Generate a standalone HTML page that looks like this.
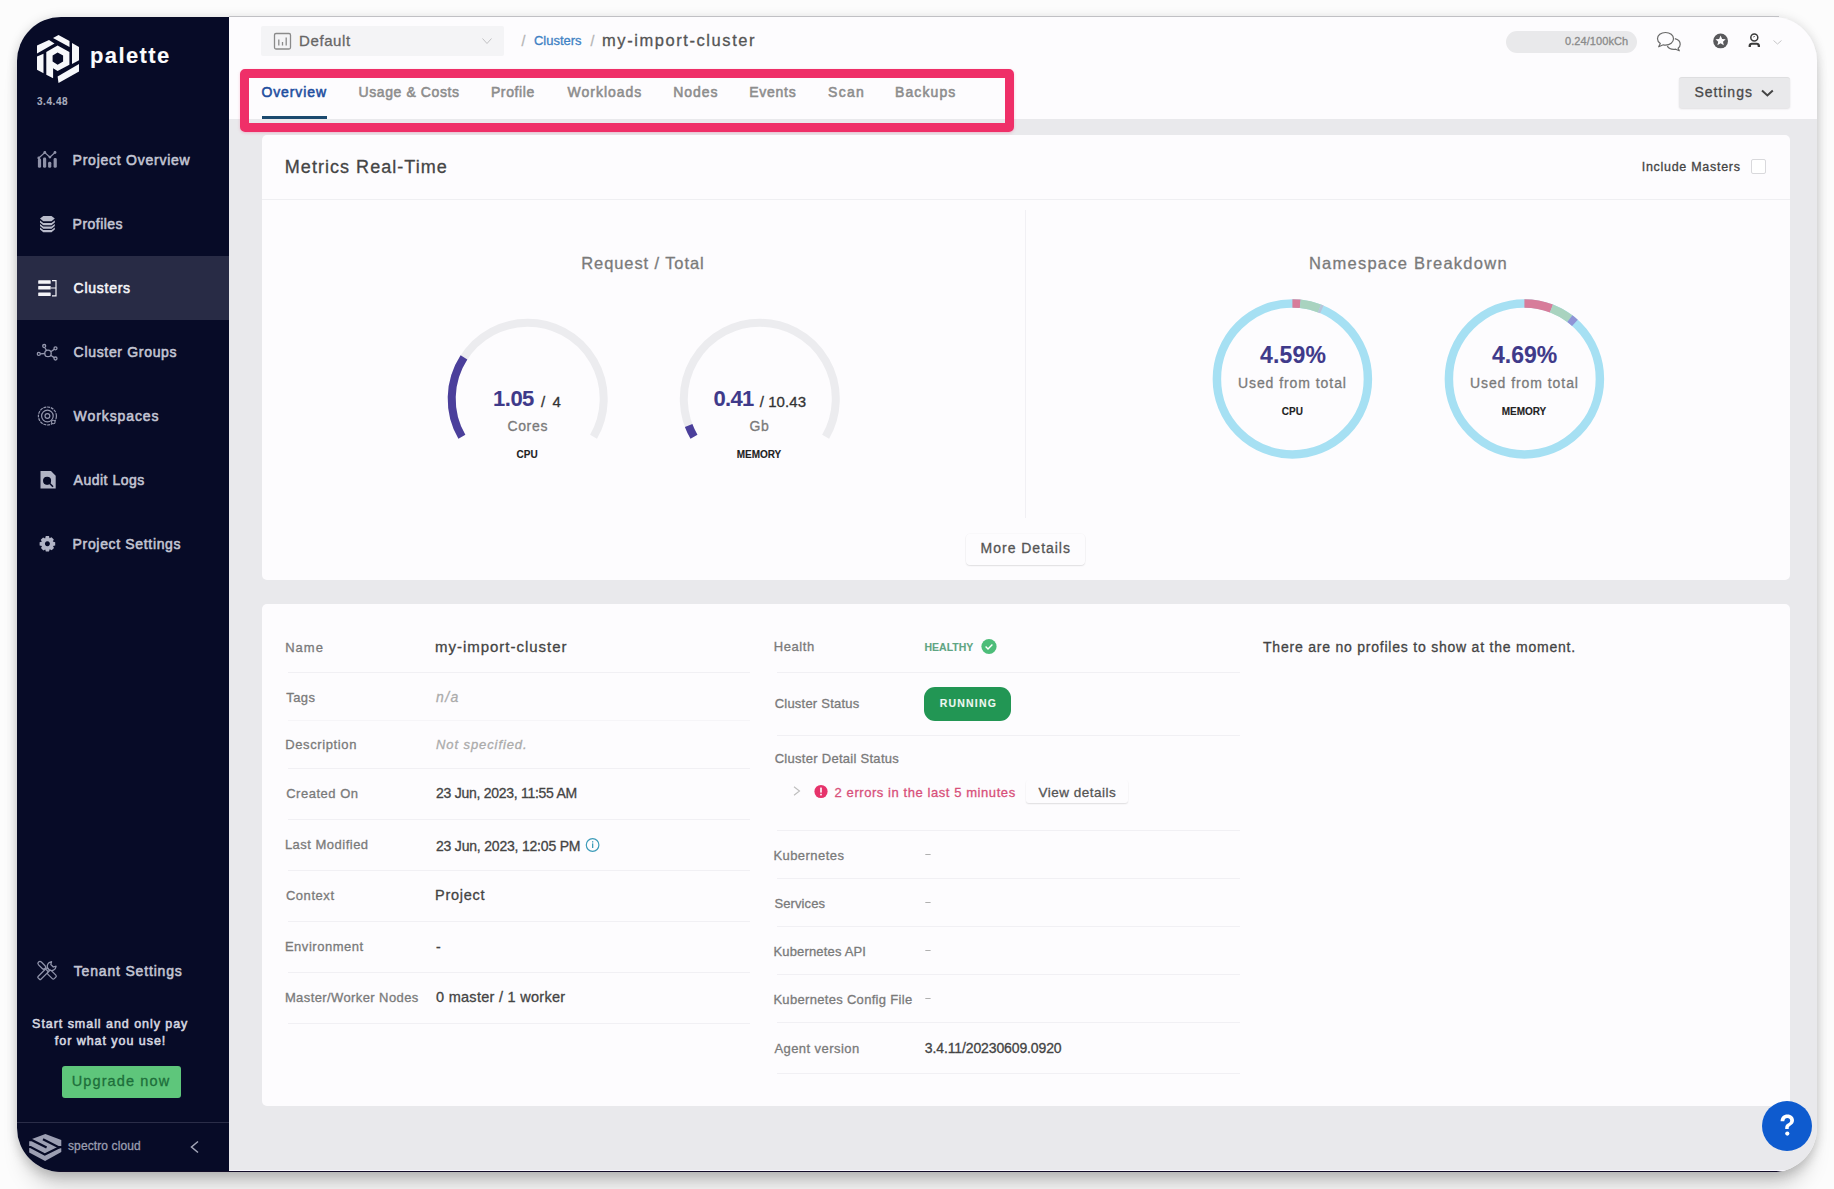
<!DOCTYPE html>
<html><head><meta charset="utf-8">
<style>
*{box-sizing:border-box;margin:0;padding:0}
html,body{width:1834px;height:1189px;overflow:hidden;background:#fcfcfc;font-family:"Liberation Sans",sans-serif}
#shadow{position:absolute;left:17px;top:17px;width:1800px;height:1155px;border-radius:44px;box-shadow:0 6px 12px rgba(0,0,0,.12),0 0 12px rgba(0,0,0,.10),0 24px 22px -8px rgba(0,0,0,.15)}
#win{position:absolute;left:17px;top:17px;width:1800px;height:1155px;border-radius:44px;overflow:hidden;background:#e9e9ec}
#pg{position:absolute;left:-17px;top:-17px;width:1834px;height:1189px}
.r{position:absolute}
.t{position:absolute;white-space:nowrap;line-height:1;-webkit-text-stroke:0.3px currentColor}
svg.ov{position:absolute;left:0;top:0}
</style></head><body>
<div class="r" style="left:229px;top:16px;width:1550px;height:1px;background:#cdcdd1"></div>
<div id="shadow"></div>
<div id="win"><div id="pg">
  <!-- sidebar -->
  <div class="r" style="left:0;top:0;width:229px;height:1189px;background:#070b27"></div>
  <div class="r" style="left:0;top:256px;width:229px;height:64px;background:#282b45"></div>
  <div class="r" style="left:0;top:1122px;width:229px;height:1px;background:#2a2d48"></div>
  <div class="r" style="left:62px;top:1066px;width:118.5px;height:31.5px;background:#5ec67b;border-radius:3px"></div>
  <!-- header -->
  <div class="r" style="left:229px;top:0;width:1605px;height:119px;background:#fdfcfe"></div>
  <div class="r" style="left:261px;top:26px;width:243px;height:30px;background:#f4f4f6;border-radius:2px"></div>
  <div class="r" style="left:1506px;top:31px;width:131px;height:22px;background:#e9e9eb;border-radius:11px"></div>
  <div class="r" style="left:1679px;top:76.5px;width:110.5px;height:31px;background:#e9e9eb;border-radius:3px;border-top:1px solid #dedee0;box-shadow:0 1px 2px rgba(0,0,0,.12)"></div>
  <!-- pink highlight -->
  <div class="r" style="left:240px;top:69px;width:774px;height:63px;border:9.5px solid #ef2f68;border-radius:5px;box-shadow:0 1px 3px rgba(240,48,106,.25)"></div>
  <div class="r" style="left:262px;top:116px;width:65px;height:3px;background:#1b4a6f"></div>
  <!-- cards -->
  <div class="r" style="left:262px;top:135px;width:1528px;height:445px;background:#fdfcfe;border-radius:5px"></div>
  <div class="r" style="left:262px;top:199px;width:1528px;height:1px;background:#efeff2"></div>
  <div class="r" style="left:1025px;top:210px;width:1px;height:308px;background:#f1f0f4"></div>
  <div class="r" style="left:1751px;top:159px;width:15px;height:15px;border:1px solid #d9d9dc;border-radius:2px;background:#fff"></div>
  <div class="r" style="left:966px;top:534px;width:119px;height:31px;border-radius:4px;box-shadow:0 1px 1.5px rgba(0,0,0,.10),0 0 0 .5px rgba(0,0,0,.03)"></div>
  <div class="r" style="left:262px;top:604px;width:1528px;height:501.5px;background:#fdfcfe;border-radius:5px"></div>
  <!-- row dividers -->
  <div class="r" style="left:288px;top:672px;width:462px;height:1px;background:#f1f0f4"></div>
  <div class="r" style="left:288px;top:720px;width:462px;height:1px;background:#f6f5f8"></div>
  <div class="r" style="left:288px;top:768px;width:462px;height:1px;background:#f1f0f4"></div>
  <div class="r" style="left:288px;top:819px;width:462px;height:1px;background:#f1f0f4"></div>
  <div class="r" style="left:288px;top:870px;width:462px;height:1px;background:#f1f0f4"></div>
  <div class="r" style="left:288px;top:921px;width:462px;height:1px;background:#f1f0f4"></div>
  <div class="r" style="left:288px;top:972px;width:462px;height:1px;background:#f1f0f4"></div>
  <div class="r" style="left:288px;top:1023px;width:462px;height:1px;background:#f1f0f4"></div>
  <div class="r" style="left:777px;top:672px;width:463px;height:1px;background:#f1f0f4"></div>
  <div class="r" style="left:777px;top:735px;width:463px;height:1px;background:#f1f0f4"></div>
  <div class="r" style="left:777px;top:830px;width:463px;height:1px;background:#f1f0f4"></div>
  <div class="r" style="left:777px;top:878px;width:463px;height:1px;background:#f1f0f4"></div>
  <div class="r" style="left:777px;top:926px;width:463px;height:1px;background:#f1f0f4"></div>
  <div class="r" style="left:777px;top:974px;width:463px;height:1px;background:#f1f0f4"></div>
  <div class="r" style="left:777px;top:1022px;width:463px;height:1px;background:#f1f0f4"></div>
  <div class="r" style="left:777px;top:1073px;width:463px;height:1px;background:#f1f0f4"></div>
  <div class="r" style="left:924.4px;top:687px;width:87px;height:33.5px;background:#229654;border-radius:11px"></div>
  <div class="r" style="left:1026px;top:780px;width:102px;height:23px;border-radius:3px;box-shadow:0 1px 1.5px rgba(0,0,0,.12)"></div>
  <!-- bottom dark line -->
  <div class="r" style="left:229px;top:1170px;width:1605px;height:1px;background:#f8f6fe"></div><div class="r" style="left:0;top:1171px;width:1834px;height:1px;background:#120c28"></div>
  <!-- help -->
  <div class="r" style="left:1762px;top:1101px;width:50px;height:50px;border-radius:25px;background:#0e5bcf"></div>

  <svg class="ov" width="1834" height="1189" viewBox="0 0 1834 1189">
<path d="M461.88,436.80 A76,76 0 1 1 593.52,436.80" fill="none" stroke="#ececef" stroke-width="8"/>
<path d="M461.88,436.80 A76,76 0 0 1 463.96,357.41" fill="none" stroke="#4b3f9b" stroke-width="8"/>
<path d="M693.98,436.80 A76,76 0 1 1 825.62,436.80" fill="none" stroke="#ececef" stroke-width="8"/>
<path d="M693.98,436.80 A76,76 0 0 1 688.64,425.50" fill="none" stroke="#4b3f9b" stroke-width="8"/>
<circle cx="1292.4" cy="378.9" r="75.5" fill="none" stroke="#a6e0f3" stroke-width="8.5"/>
<path d="M1292.40,303.40 A75.5,75.5 0 0 1 1300.29,303.81" fill="none" stroke="#d77c9a" stroke-width="8.5"/>
<path d="M1300.29,303.81 A75.5,75.5 0 0 1 1319.46,308.41" fill="none" stroke="#a9d3bf" stroke-width="8.5"/>
<path d="M1319.46,308.41 A75.5,75.5 0 0 1 1321.90,309.40" fill="none" stroke="#b9c3d8" stroke-width="8.5"/>
<circle cx="1524.4" cy="378.9" r="75.5" fill="none" stroke="#a6e0f3" stroke-width="8.5"/>
<path d="M1524.40,303.40 A75.5,75.5 0 0 1 1551.46,308.41" fill="none" stroke="#d77c9a" stroke-width="8.5"/>
<path d="M1551.46,308.41 A75.5,75.5 0 0 1 1569.84,318.60" fill="none" stroke="#a9d3bf" stroke-width="8.5"/>
<path d="M1569.84,318.60 A75.5,75.5 0 0 1 1574.92,322.79" fill="none" stroke="#8f94d6" stroke-width="8.5"/>
<!-- palette logo -->
<g fill="#f7f8fb">
<polygon points="37,45.5 49,40 54.5,43.5 37,53.5"/>
<polygon points="53,38 58.5,35 69.5,41 69.5,47"/>
<polygon points="72,43 79,47 79,60.2 72,64"/>
<polygon points="57.6,76.5 79,64 79,71.5 58.5,83"/>
<polygon points="37,56.5 43.5,53.8 43.5,73.3 37,69.7"/>
<path fill-rule="evenodd" d="M46.3,52 L57.6,45.6 L69.4,52 L69.4,64.7 L57.6,71 L53.1,68.3 L53.1,78.3 L46.3,74.7 Z M57.6,52.4 L63.1,55.6 L63.1,61.5 L57.6,64.7 L52.6,61.5 L52.6,55.6 Z"/>
</g>
<!-- project overview -->
<g fill="#8f92a8">
<rect x="37.9" y="158.5" width="3.2" height="9.3" rx="1.4"/>
<rect x="43" y="157.6" width="3.2" height="10.2" rx="1.4"/>
<rect x="48.1" y="161.8" width="3.2" height="6" rx="1.4"/>
<rect x="53.6" y="158" width="3.2" height="9.8" rx="1.4"/>
<circle cx="38.8" cy="158" r="1.4"/><circle cx="44.8" cy="152.5" r="1.4"/><circle cx="49.9" cy="157.1" r="1.4"/><circle cx="55" cy="152.5" r="1.4"/>
</g>
<polyline points="38.8,158 44.8,152.5 49.9,157.1 55,152.5" fill="none" stroke="#8f92a8" stroke-width="1.2"/>
<!-- profiles -->
<g fill="#b9bccb">
<path d="M40,218.6 L43.3,216 L51.5,216 L54.8,218.6 L51.5,221.2 L43.3,221.2 Z"/>
<path d="M40,220.6 L43.3,223 L51.5,223 L54.8,220.6 L54.8,222.6 L51.5,225.2 L43.3,225.2 L40,222.6 Z"/>
<path d="M40,224.1 L43.3,226.5 L51.5,226.5 L54.8,224.1 L54.8,226.1 L51.5,228.7 L43.3,228.7 L40,226.1 Z"/>
<path d="M40,227.6 L43.3,230 L51.5,230 L54.8,227.6 L54.8,229.6 L51.5,232.3 L43.3,232.3 L40,229.6 Z"/>
</g>
<!-- clusters -->
<g fill="#f4f4f8">
<rect x="38.2" y="280.3" width="12.5" height="3.5" rx="0.6"/>
<rect x="38.2" y="286" width="12.5" height="3.5" rx="0.6"/>
<rect x="38.2" y="292.5" width="12.5" height="3.5" rx="0.6"/>
</g>
<path d="M52,280.6 H56 V295.8 H52 M51,288 H56" fill="none" stroke="#f4f4f8" stroke-width="1.2"/>
<!-- cluster groups -->
<g fill="none" stroke="#9598ae" stroke-width="1.3">
<circle cx="48" cy="353.4" r="3.2"/>
<circle cx="44.2" cy="346" r="1.5"/><circle cx="55.5" cy="348.3" r="1.5"/><circle cx="38.8" cy="353.9" r="1.5"/><circle cx="55.5" cy="358.5" r="1.5"/>
<path d="M45,348 L46.6,350.5 M54.2,349.4 L50.8,351.8 M40.3,353.8 L44.8,353.5 M54.2,357.6 L50.6,355.3"/>
</g>
<!-- workspaces -->
<g fill="none" stroke="#9598ae" stroke-width="1.2">
<circle cx="47.4" cy="416" r="9" stroke-dasharray="3 0.8"/>
<circle cx="47.4" cy="416" r="5.8"/>
<circle cx="47.4" cy="416" r="2.4"/>
</g>
<circle cx="53.3" cy="422" r="1.8" fill="#070b27" stroke="#9598ae" stroke-width="1.1"/>
<!-- audit logs -->
<path fill="#b1b4c5" fill-rule="evenodd" d="M40.5,471 H51 L55.7,475.7 V488.6 H40.5 Z M47.1,477 a3.7,3.7 0 1,0 0.01,0 Z"/>
<circle cx="47.1" cy="480.7" r="3.3" fill="none" stroke="#070b27" stroke-width="1.4"/>
<path d="M49.5,483.2 L53,486.7" stroke="#070b27" stroke-width="1.6"/>
<!-- project settings gear -->
<g transform="translate(47.4,543.8)">
<path fill="#b1b4c5" fill-rule="evenodd" d="M-1.6,-7.8 H1.6 L2.1,-5.6 L4.1,-6.6 L6.4,-4.3 L5.4,-2.3 L7.8,-1.6 V1.6 L5.6,2.1 L6.6,4.1 L4.3,6.4 L2.3,5.4 L1.6,7.8 H-1.6 L-2.1,5.6 L-4.1,6.6 L-6.4,4.3 L-5.4,2.3 L-7.8,1.6 V-1.6 L-5.6,-2.1 L-6.6,-4.1 L-4.3,-6.4 L-2.3,-5.4 Z M0,-2.5 a2.5,2.5 0 1,0 0.01,0 Z"/>
</g>
<!-- tenant settings -->
<g fill="none" stroke="#9094ab" stroke-width="1.25" stroke-linejoin="round">
<rect x="-4.6" y="-2" width="9.2" height="4" rx="2" transform="translate(41.8,965.3) rotate(45)"/>
<path d="M45.2,968.6 L48.6,972"/>
<rect x="-4.6" y="-2.5" width="9.2" height="5" rx="1.4" transform="translate(51.8,974.6) rotate(45)"/>
<rect x="-6.8" y="-2" width="13.6" height="4" rx="1" transform="translate(43.6,973.8) rotate(-45)"/>
<path d="M48.3,969.2 A5,5 0 0 1 49.2,962.6 L51.6,961.7 L50.8,964.5 L53.3,967 L56.1,966.2 L55.3,968.6 A5,5 0 0 1 48.8,969.8"/>
</g>
<!-- spectro cloud logo -->
<polygon points="45.4,1134.1 61.3,1140 61.3,1152.1 45.1,1160.9 29.2,1152.4 29.2,1140" fill="#9c9fb3"/>
<g fill="none" stroke="#070b27" stroke-width="2.2">
<path d="M28.5,1140.2 L32,1140.2 L46.6,1147.6"/>
<path d="M43,1139.2 L58.6,1147.2 L62,1147.2"/>
<path d="M28.5,1147 L30.6,1147 L44.8,1154.5 L60,1147"/>
</g>
<path d="M198,1141.5 L191.5,1147 L198,1152.5" fill="none" stroke="#a3a6b8" stroke-width="1.5"/>
<!-- header: selector icon -->
<rect x="274.5" y="33.5" width="16" height="15.5" rx="1.5" fill="none" stroke="#8a8a8a" stroke-width="1.3"/>
<path d="M278.8,45.5 V39.5 M282.5,45.5 V42 M286.2,45.5 V37.5" stroke="#8a8a8a" stroke-width="1.3"/>
<path d="M482.5,38.5 L487,43.5 L491.5,38.5" fill="none" stroke="#c2c2c4" stroke-width="1"/>
<!-- chat -->
<g fill="none" stroke="#6a6a6a" stroke-width="1.2" stroke-linejoin="round">
<path d="M1665.5,32.5 c-4.6,0 -8,2.8 -8,6.3 c0,2 1.1,3.7 2.8,4.8 l-1.6,3.2 l4.6,-2 c0.7,0.2 1.5,0.3 2.2,0.3 c4.6,0 8,-2.8 8,-6.3 c0,-3.5 -3.4,-6.3 -8,-6.3 z"/>
<path d="M1674.8,38.6 c3.2,0.8 5.4,3 5.4,5.6 c0,1.6 -0.8,3 -2.1,4 l1.2,2.6 l-3.6,-1.6 c-0.6,0.1 -1.2,0.2 -1.8,0.2 c-3,0 -5.6,-1.4 -6.6,-3.4"/>
</g>
<!-- star badge -->
<circle cx="1720.6" cy="40.9" r="7.4" fill="#59595c"/>
<path fill="#fdfcfe" d="M1720.6,35.6 L1722.1,39 L1725.7,39.3 L1723,41.7 L1723.8,45.2 L1720.6,43.3 L1717.4,45.2 L1718.2,41.7 L1715.5,39.3 L1719.1,39 Z"/>
<!-- user -->
<circle cx="1754.3" cy="37.5" r="3.5" fill="none" stroke="#3a3a3a" stroke-width="1.5"/>
<path d="M1753.2,37 l1.6,-0.6" stroke="#3a3a3a" stroke-width="0.8"/>
<path d="M1748.6,46.9 V45.6 c0,-1.8 1.4,-2.9 3.2,-2.9 h5 c1.8,0 3.2,1.1 3.2,2.9 V46.9 h-2.3 v-0.9 c0,-0.8 -0.6,-1.2 -1.4,-1.2 h-4 c-0.8,0 -1.4,0.4 -1.4,1.2 v0.9 z" fill="#3a3a3a"/>
<path d="M1773.5,40.5 L1777.5,44 L1781.5,40.5" fill="none" stroke="#c6c6c8" stroke-width="1"/>
<!-- settings chevron -->
<path d="M1762,90.5 L1767.4,95.5 L1772.8,90.5" fill="none" stroke="#444" stroke-width="2"/>
<!-- health check -->
<circle cx="989" cy="646.5" r="7.6" fill="#4dbd79"/>
<path d="M985.6,646.6 L988,649 L992.4,644.4" fill="none" stroke="#fff" stroke-width="1.4"/>
<!-- chevron right -->
<path d="M794,786.8 L799.5,791 L794,795.2" fill="none" stroke="#bdbdbd" stroke-width="1.1"/>
<!-- red error -->
<circle cx="821" cy="791.5" r="6.6" fill="#e6336b"/>
<rect x="820.2" y="787.6" width="1.6" height="5" fill="#fff"/><rect x="820.2" y="793.8" width="1.6" height="1.6" fill="#fff"/>
<!-- info icon -->
<circle cx="592.6" cy="845" r="6.3" fill="none" stroke="#3d9cb9" stroke-width="1.2"/>
<rect x="592" y="843.4" width="1.3" height="4.6" fill="#3d9cb9"/><rect x="592" y="841.2" width="1.3" height="1.3" fill="#3d9cb9"/>
<!-- dashes -->
<g fill="#b0b0b0">
<rect x="925.3" y="854" width="5.3" height="1"/>
<rect x="925.3" y="902" width="5.3" height="1"/>
<rect x="925.3" y="950" width="5.3" height="1"/>
<rect x="925.3" y="998" width="5.3" height="1"/>
</g>
<!-- help ? -->
<path d="M1780.6,1121.2 c0,-4.2 3,-6.8 6.8,-6.8 c3.9,0 6.6,2.5 6.6,5.9 c0,2.8 -1.6,4 -3.4,5.1 c-1.5,0.9 -1.9,1.5 -1.9,2.9 v0.6 h-3.5 v-0.9 c0,-2.3 0.9,-3.4 2.7,-4.5 c1.5,-0.9 2.3,-1.6 2.3,-3.1 c0,-1.5 -1.1,-2.5 -2.8,-2.5 c-1.8,0 -3,1.2 -3.1,3.3 z" fill="#ffffff"/>
<circle cx="1787.3" cy="1133.6" r="2.1" fill="#ffffff"/>

</svg>
<div class="t" style="left:90.0px;top:45.4px;font-size:22px;font-weight:bold;color:#fbfbfd;letter-spacing:1.39px;-webkit-text-stroke:0.1px currentColor;">palette</div>
<div class="t" style="left:37.0px;top:97.0px;font-size:10px;font-weight:bold;color:#a8acbe;letter-spacing:0.55px;-webkit-text-stroke:0.1px currentColor;">3.4.48</div>
<div class="t" style="left:72.6px;top:153.1px;font-size:14px;font-weight:normal;color:#c3c5d3;letter-spacing:0.75px;-webkit-text-stroke:0.55px currentColor;">Project Overview</div>
<div class="t" style="left:72.6px;top:217.1px;font-size:14px;font-weight:normal;color:#c3c5d3;letter-spacing:0.47px;-webkit-text-stroke:0.55px currentColor;">Profiles</div>
<div class="t" style="left:73.6px;top:281.1px;font-size:14px;font-weight:normal;color:#f4f4f8;letter-spacing:0.74px;-webkit-text-stroke:0.55px currentColor;">Clusters</div>
<div class="t" style="left:73.6px;top:345.1px;font-size:14px;font-weight:normal;color:#c3c5d3;letter-spacing:0.68px;-webkit-text-stroke:0.55px currentColor;">Cluster Groups</div>
<div class="t" style="left:73.6px;top:409.1px;font-size:14px;font-weight:normal;color:#c3c5d3;letter-spacing:0.91px;-webkit-text-stroke:0.55px currentColor;">Workspaces</div>
<div class="t" style="left:73.6px;top:473.1px;font-size:14px;font-weight:normal;color:#c3c5d3;letter-spacing:0.50px;-webkit-text-stroke:0.55px currentColor;">Audit Logs</div>
<div class="t" style="left:72.6px;top:537.1px;font-size:14px;font-weight:normal;color:#c3c5d3;letter-spacing:0.66px;-webkit-text-stroke:0.55px currentColor;">Project Settings</div>
<div class="t" style="left:73.8px;top:963.9px;font-size:14px;font-weight:normal;color:#c3c5d3;letter-spacing:0.82px;-webkit-text-stroke:0.55px currentColor;">Tenant Settings</div>
<div class="t" style="left:32.1px;top:1017.6px;font-size:12.5px;font-weight:normal;color:#d6d7e0;letter-spacing:0.95px;-webkit-text-stroke:0.55px currentColor;">Start small and only pay</div>
<div class="t" style="left:54.8px;top:1035.0px;font-size:12.5px;font-weight:normal;color:#d6d7e0;letter-spacing:0.96px;-webkit-text-stroke:0.55px currentColor;">for what you use!</div>
<div class="t" style="left:71.7px;top:1074.3px;font-size:14.5px;font-weight:normal;color:#1d6e3a;letter-spacing:1.12px;">Upgrade now</div>
<div class="t" style="left:68.0px;top:1139.5px;font-size:12px;font-weight:normal;color:#9a9db0;letter-spacing:0.11px;">spectro cloud</div>
<div class="t" style="left:299.0px;top:33.3px;font-size:15px;font-weight:normal;color:#666666;letter-spacing:0.61px;">Default</div>
<div class="t" style="left:521.5px;top:33.6px;font-size:14px;font-weight:normal;color:#b5b5b5;letter-spacing:0.00px;">/</div>
<div class="t" style="left:534.0px;top:34.0px;font-size:13px;font-weight:normal;color:#3f82c4;letter-spacing:-0.03px;">Clusters</div>
<div class="t" style="left:590.5px;top:33.6px;font-size:14px;font-weight:normal;color:#b5b5b5;letter-spacing:0.00px;">/</div>
<div class="t" style="left:602.0px;top:31.8px;font-size:16.5px;font-weight:normal;color:#555555;letter-spacing:1.57px;">my-import-cluster</div>
<div class="t" style="left:1565.0px;top:35.7px;font-size:11px;font-weight:normal;color:#8a8a8a;letter-spacing:0.07px;">0.24/100kCh</div>
<div class="t" style="left:261.4px;top:85.1px;font-size:14px;font-weight:normal;color:#1f4f9f;letter-spacing:0.91px;-webkit-text-stroke:0.55px currentColor;">Overview</div>
<div class="t" style="left:358.5px;top:85.1px;font-size:14px;font-weight:normal;color:#8d8d8d;letter-spacing:0.59px;-webkit-text-stroke:0.55px currentColor;">Usage &amp; Costs</div>
<div class="t" style="left:490.9px;top:85.1px;font-size:14px;font-weight:normal;color:#8d8d8d;letter-spacing:0.63px;-webkit-text-stroke:0.55px currentColor;">Profile</div>
<div class="t" style="left:567.6px;top:85.1px;font-size:14px;font-weight:normal;color:#8d8d8d;letter-spacing:0.97px;-webkit-text-stroke:0.55px currentColor;">Workloads</div>
<div class="t" style="left:673.2px;top:85.1px;font-size:14px;font-weight:normal;color:#8d8d8d;letter-spacing:0.93px;-webkit-text-stroke:0.55px currentColor;">Nodes</div>
<div class="t" style="left:749.2px;top:85.1px;font-size:14px;font-weight:normal;color:#8d8d8d;letter-spacing:0.74px;-webkit-text-stroke:0.55px currentColor;">Events</div>
<div class="t" style="left:828.1px;top:85.1px;font-size:14px;font-weight:normal;color:#8d8d8d;letter-spacing:1.29px;-webkit-text-stroke:0.55px currentColor;">Scan</div>
<div class="t" style="left:895.0px;top:85.1px;font-size:14px;font-weight:normal;color:#8d8d8d;letter-spacing:1.10px;-webkit-text-stroke:0.55px currentColor;">Backups</div>
<div class="t" style="left:1694.4px;top:85.0px;font-size:14px;font-weight:normal;color:#4a4a4a;letter-spacing:0.99px;">Settings</div>
<div class="t" style="left:284.8px;top:157.5px;font-size:18px;font-weight:normal;color:#454545;letter-spacing:1.04px;">Metrics Real-Time</div>
<div class="t" style="left:1641.7px;top:161.1px;font-size:12.5px;font-weight:normal;color:#444444;letter-spacing:0.72px;">Include Masters</div>
<div class="t" style="left:581.3px;top:255.3px;font-size:16.5px;font-weight:normal;color:#7a7a7a;letter-spacing:0.90px;">Request / Total</div>
<div class="t" style="left:1308.9px;top:255.3px;font-size:16.5px;font-weight:normal;color:#7a7a7a;letter-spacing:1.25px;">Namespace Breakdown</div>
<div class="t" style="left:493.1px;top:388.1px;font-size:22px;font-weight:bold;color:#3f3a8a;letter-spacing:-0.53px;-webkit-text-stroke:0.1px currentColor;">1.05</div>
<div class="t" style="left:541.0px;top:394.0px;font-size:15px;font-weight:normal;color:#333333;letter-spacing:1.58px;">/ 4</div>
<div class="t" style="left:507.4px;top:419.3px;font-size:14px;font-weight:normal;color:#7a7a7a;letter-spacing:0.66px;">Cores</div>
<div class="t" style="left:516.6px;top:449.7px;font-size:10px;font-weight:bold;color:#222222;letter-spacing:0.05px;-webkit-text-stroke:0.1px currentColor;">CPU</div>
<div class="t" style="left:713.5px;top:388.1px;font-size:22px;font-weight:bold;color:#3f3a8a;letter-spacing:-0.69px;-webkit-text-stroke:0.1px currentColor;">0.41</div>
<div class="t" style="left:759.7px;top:394.0px;font-size:15px;font-weight:normal;color:#333333;letter-spacing:0.08px;">/ 10.43</div>
<div class="t" style="left:749.4px;top:419.3px;font-size:14px;font-weight:normal;color:#7a7a7a;letter-spacing:0.61px;">Gb</div>
<div class="t" style="left:736.8px;top:449.7px;font-size:10px;font-weight:bold;color:#222222;letter-spacing:-0.05px;-webkit-text-stroke:0.1px currentColor;">MEMORY</div>
<div class="t" style="left:1260.0px;top:344.2px;font-size:23px;font-weight:bold;color:#3f3a8a;letter-spacing:0.18px;-webkit-text-stroke:0.1px currentColor;">4.59%</div>
<div class="t" style="left:1237.9px;top:375.8px;font-size:14px;font-weight:normal;color:#7a7a7a;letter-spacing:0.94px;">Used from total</div>
<div class="t" style="left:1281.8px;top:406.7px;font-size:10px;font-weight:bold;color:#222222;letter-spacing:0.05px;-webkit-text-stroke:0.1px currentColor;">CPU</div>
<div class="t" style="left:1492.0px;top:344.2px;font-size:23px;font-weight:bold;color:#3f3a8a;letter-spacing:0.01px;-webkit-text-stroke:0.1px currentColor;">4.69%</div>
<div class="t" style="left:1469.9px;top:375.8px;font-size:14px;font-weight:normal;color:#7a7a7a;letter-spacing:0.94px;">Used from total</div>
<div class="t" style="left:1501.8px;top:406.7px;font-size:10px;font-weight:bold;color:#222222;letter-spacing:-0.05px;-webkit-text-stroke:0.1px currentColor;">MEMORY</div>
<div class="t" style="left:980.6px;top:540.9px;font-size:14px;font-weight:normal;color:#555555;letter-spacing:0.98px;">More Details</div>
<div class="t" style="left:285.2px;top:640.6px;font-size:13px;font-weight:normal;color:#7a7a7a;letter-spacing:1.02px;">Name</div>
<div class="t" style="left:435.0px;top:639.3px;font-size:15px;font-weight:normal;color:#444444;letter-spacing:0.98px;">my-import-cluster</div>
<div class="t" style="left:286.2px;top:690.5px;font-size:13px;font-weight:normal;color:#7a7a7a;letter-spacing:0.45px;">Tags</div>
<div class="t" style="left:436.0px;top:689.6px;font-size:14px;font-weight:normal;color:#ababab;letter-spacing:1.41px;font-style:italic;">n/a</div>
<div class="t" style="left:285.2px;top:738.1px;font-size:13px;font-weight:normal;color:#7a7a7a;letter-spacing:0.62px;">Description</div>
<div class="t" style="left:436.0px;top:738.1px;font-size:13px;font-weight:normal;color:#ababab;letter-spacing:0.91px;font-style:italic;">Not specified.</div>
<div class="t" style="left:286.2px;top:787.1px;font-size:13px;font-weight:normal;color:#7a7a7a;letter-spacing:0.51px;">Created On</div>
<div class="t" style="left:436.0px;top:786.2px;font-size:14px;font-weight:normal;color:#444444;letter-spacing:-0.27px;">23 Jun, 2023, 11:55 AM</div>
<div class="t" style="left:284.9px;top:838.4px;font-size:13px;font-weight:normal;color:#7a7a7a;letter-spacing:0.49px;">Last Modified</div>
<div class="t" style="left:436.0px;top:838.6px;font-size:14px;font-weight:normal;color:#444444;letter-spacing:-0.20px;">23 Jun, 2023, 12:05 PM</div>
<div class="t" style="left:285.9px;top:889.4px;font-size:13px;font-weight:normal;color:#7a7a7a;letter-spacing:0.55px;">Context</div>
<div class="t" style="left:435.0px;top:888.2px;font-size:14.5px;font-weight:normal;color:#444444;letter-spacing:0.72px;">Project</div>
<div class="t" style="left:284.9px;top:940.4px;font-size:13px;font-weight:normal;color:#7a7a7a;letter-spacing:0.53px;">Environment</div>
<div class="t" style="left:436.0px;top:939.5px;font-size:14px;font-weight:normal;color:#444444;letter-spacing:0.00px;">-</div>
<div class="t" style="left:284.9px;top:991.1px;font-size:13px;font-weight:normal;color:#7a7a7a;letter-spacing:0.40px;">Master/Worker Nodes</div>
<div class="t" style="left:436.0px;top:989.8px;font-size:14.5px;font-weight:normal;color:#444444;letter-spacing:0.28px;">0 master / 1 worker</div>
<div class="t" style="left:773.7px;top:640.2px;font-size:13px;font-weight:normal;color:#7a7a7a;letter-spacing:0.59px;">Health</div>
<div class="t" style="left:924.4px;top:642.3px;font-size:10.5px;font-weight:bold;color:#60a583;letter-spacing:0.03px;-webkit-text-stroke:0.1px currentColor;">HEALTHY</div>
<div class="t" style="left:774.7px;top:696.7px;font-size:13px;font-weight:normal;color:#7a7a7a;letter-spacing:0.22px;">Cluster Status</div>
<div class="t" style="left:939.7px;top:698.4px;font-size:10.5px;font-weight:bold;color:#eef7f1;letter-spacing:1.19px;-webkit-text-stroke:0.1px currentColor;">RUNNING</div>
<div class="t" style="left:774.7px;top:752.2px;font-size:13px;font-weight:normal;color:#7a7a7a;letter-spacing:0.28px;">Cluster Detail Status</div>
<div class="t" style="left:834.6px;top:785.5px;font-size:13px;font-weight:normal;color:#d8507a;letter-spacing:0.57px;">2 errors in the last 5 minutes</div>
<div class="t" style="left:1038.4px;top:785.6px;font-size:13.5px;font-weight:normal;color:#555555;letter-spacing:0.51px;">View details</div>
<div class="t" style="left:773.4px;top:848.5px;font-size:13px;font-weight:normal;color:#7a7a7a;letter-spacing:0.45px;">Kubernetes</div>
<div class="t" style="left:774.4px;top:896.6px;font-size:13px;font-weight:normal;color:#7a7a7a;letter-spacing:0.12px;">Services</div>
<div class="t" style="left:773.4px;top:944.7px;font-size:13px;font-weight:normal;color:#7a7a7a;letter-spacing:0.17px;">Kubernetes API</div>
<div class="t" style="left:773.4px;top:992.8px;font-size:13px;font-weight:normal;color:#7a7a7a;letter-spacing:0.31px;">Kubernetes Config File</div>
<div class="t" style="left:774.4px;top:1042.0px;font-size:13px;font-weight:normal;color:#7a7a7a;letter-spacing:0.44px;">Agent version</div>
<div class="t" style="left:924.8px;top:1041.1px;font-size:14px;font-weight:normal;color:#444444;letter-spacing:-0.12px;">3.4.11/20230609.0920</div>
<div class="t" style="left:1263.0px;top:640.0px;font-size:14px;font-weight:normal;color:#444444;letter-spacing:0.78px;">There are no profiles to show at the moment.</div>
</div></div>
</body></html>
